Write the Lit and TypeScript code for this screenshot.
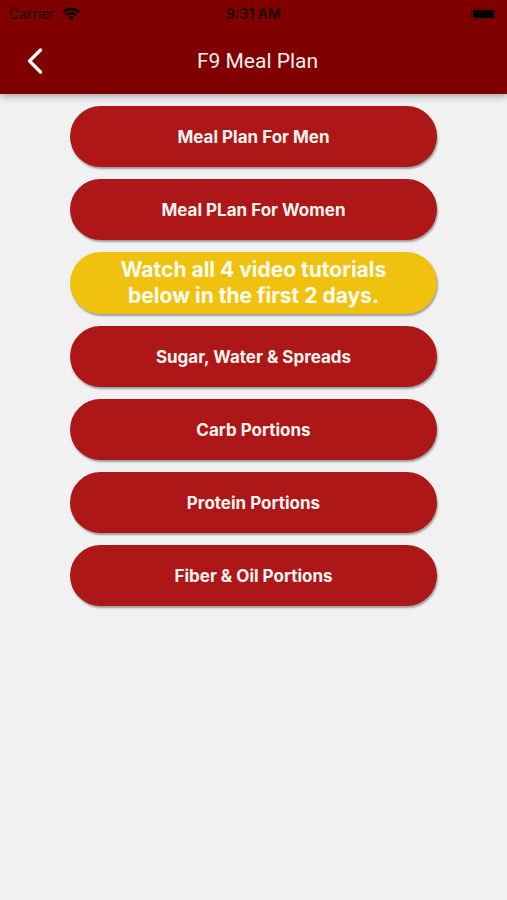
import { LitElement, html, css } from "lit";
import { customElement } from "lit/decorators.js";

interface MenuItem {
  label: string;
  notice?: boolean;
}

const ITEMS: MenuItem[] = [
  { label: "Meal Plan For Men" },
  { label: "Meal PLan For Women" },
  { label: "Watch all 4 video tutorials below in the first 2 days.", notice: true },
  { label: "Sugar, Water & Spreads" },
  { label: "Carb Portions" },
  { label: "Protein Portions" },
  { label: "Fiber & Oil Portions" },
];

@customElement("app-root")
export class AppRoot extends LitElement {
  static styles = css`
    :host {
      display: block;
      min-height: 100vh;
      background: #f1f1f1;
      font-family: Inter, "Liberation Sans", sans-serif;
    }
    .top {
      background: #800000;
      box-shadow: 0 2px 8px rgba(0, 0, 0, 0.35);
    }
    .status {
      display: grid;
      grid-template-columns: 1fr auto 1fr;
      align-items: center;
      height: 27px;
      padding: 0 9px;
      font-size: 14px;
      color: #1c0000;
    }
    .carrier {
      display: flex;
      align-items: center;
      gap: 7px;
    }
    .time {
      font-weight: 600;
    }
    .battery {
      justify-self: end;
    }
    .nav {
      display: grid;
      grid-template-columns: 56px 1fr 48px;
      align-items: center;
      height: 67px;
      padding: 0 12px;
    }
    .back {
      display: grid;
      place-items: center;
      width: 46px;
      height: 48px;
      padding: 0;
      border: 0;
      background: none;
      color: #fff;
    }
    h1 {
      margin: 0;
      font: 400 21px/26px Roboto, "Liberation Sans", sans-serif;
      text-align: center;
      color: #fbeeee;
    }
    .menu {
      display: flex;
      flex-direction: column;
      align-items: center;
      gap: 12px;
      padding: 12px 0;
    }
    .item {
      width: 72.4%;
      height: 61px;
      padding: 0 24px;
      border: 0;
      border-radius: 31px;
      background: #ad1717;
      box-shadow: 1px 2px 2px rgba(0, 0, 0, 0.35);
      font: 700 17px/24px Inter, "Liberation Sans", sans-serif;
      color: #fff4f2;
    }
    .notice {
      height: 62px;
      padding: 0 40px;
      background: #f0c20f;
      font-size: 21px;
      line-height: 26px;
      color: #fffdf0;
    }
  `;

  render() {
    return html`
      <header class="top">
        <div class="status">
          <span class="carrier">
            Carrier
            <svg width="18" height="14" viewBox="0 0 18 14" fill="none" stroke="#0c0000" stroke-width="2.6" aria-hidden="true">
              <path d="M1 5.2a11.4 11.4 0 0 1 16 0M4 8.3a7.1 7.1 0 0 1 10 0" />
              <path d="M9 13.2 6.2 10.4a4 4 0 0 1 5.6 0Z" fill="#0c0000" stroke="none" />
            </svg>
          </span>
          <span class="time">9:31 AM</span>
          <svg class="battery" width="28" height="12" viewBox="0 0 28 12" aria-hidden="true">
            <rect x="1.5" y="0.5" width="24" height="11" rx="2.5" fill="none" stroke="#5c0000" />
            <rect x="3" y="2" width="21" height="8" rx="1.5" fill="#000" />
          </svg>
        </div>
        <nav class="nav">
          <button class="back" aria-label="Back">
            <svg width="18" height="28" viewBox="0 0 18 28" fill="none" stroke="currentColor" stroke-width="3.4" stroke-linecap="round" stroke-linejoin="round" aria-hidden="true">
              <path d="M14.5 3 3.5 14l11 11" />
            </svg>
          </button>
          <h1>F9 Meal Plan</h1>
        </nav>
      </header>
      <main class="menu">
        ${ITEMS.map(
          (item) => html`<button class="item ${item.notice ? "notice" : ""}">${item.label}</button>`
        )}
      </main>
    `;
  }
}
